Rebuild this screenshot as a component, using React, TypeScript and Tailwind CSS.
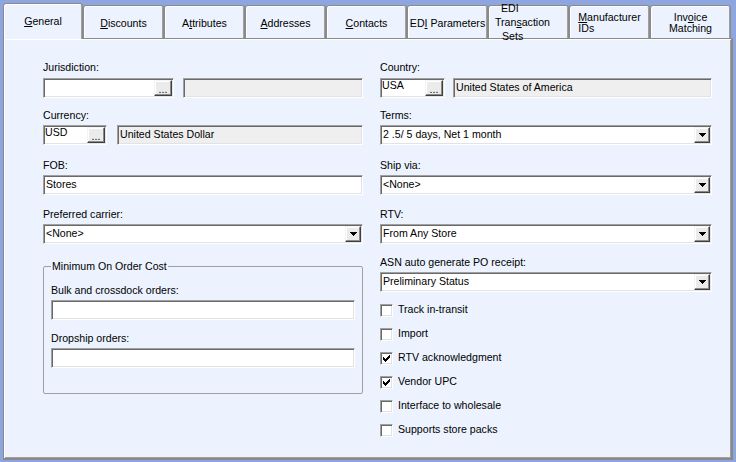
import React from 'react';

const SUNKEN =
  'border border-t-[#a0a0a0] border-l-[#a0a0a0] border-r-white border-b-white shadow-[inset_1px_1px_0_#696969,inset_-1px_-1px_0_#e3e3e3]';
const RAISED =
  'border border-t-[#f4f4f4] border-l-[#f4f4f4] border-r-[#404040] border-b-[#404040] shadow-[inset_-1px_-1px_0_#8a8a8a,inset_1px_1px_0_#ffffff] bg-[#ebebeb]';
const TAB =
  'bg-[#ecf3fe] border border-b-0 border-[#8a8a8a] rounded-t-[3px] shadow-[inset_1px_1px_0_#ffffff,inset_-1px_0_0_#a0a0a0]';

function Label({ children, className = '' }: { children: React.ReactNode; className?: string }) {
  return (
    <div className={`h-[13px] leading-[13px] mb-[3px] whitespace-nowrap ${className}`}>{children}</div>
  );
}

function TextBox({ value = '', readOnly = false, className = '' }: { value?: string; readOnly?: boolean; className?: string }) {
  return (
    <div
      className={`${SUNKEN} h-[20px] flex items-center pl-[2px] whitespace-nowrap ${
        readOnly ? 'bg-[#efefef]' : 'bg-white'
      } ${className}`}
    >
      {value}
    </div>
  );
}

function DotsButton() {
  return (
    <div className={`${RAISED} w-[18px] h-[16px] mr-px self-center flex items-end justify-center leading-[10px] pb-[1px]`}>
      ...
    </div>
  );
}

function LookupBox({ code = '', width }: { code?: string; width: string }) {
  return (
    <div className={`${SUNKEN} ${width} h-[20px] bg-white flex`}>
      <div className="flex-1 leading-[13px] pl-px">{code}</div>
      <DotsButton />
    </div>
  );
}

function Arrow() {
  return (
    <svg width="7" height="4" viewBox="0 0 7 4" shapeRendering="crispEdges">
      <path d="M0 0h7v1H0z M1 1h5v1H1z M2 2h3v1H2z M3 3h1v1H3z" fill="#000" />
    </svg>
  );
}

function Select({ value }: { value: string }) {
  return (
    <div className={`${SUNKEN} h-[20px] bg-white flex items-center`}>
      <div className="flex-1 pl-[2px] whitespace-nowrap">{value}</div>
      <div className={`${RAISED} w-[16px] h-[16px] mr-px flex items-center justify-center`}>
        <Arrow />
      </div>
    </div>
  );
}

const CHECK_PIXELS: [number, number][] = [
  [6, 0],
  [5, 1], [6, 1],
  [0, 2], [4, 2], [5, 2], [6, 2],
  [0, 3], [1, 3], [3, 3], [4, 3], [5, 3],
  [0, 4], [1, 4], [2, 4], [3, 4], [4, 4],
  [1, 5], [2, 5], [3, 5],
  [2, 6],
];

function CheckRow({ label, checked = false }: { label: string; checked?: boolean }) {
  return (
    <div className="h-[24px] flex items-center">
      <div className={`${SUNKEN} w-[13px] h-[13px] bg-white flex items-center justify-center`}>
        {checked && (
          <svg width="7" height="7" viewBox="0 0 7 7" shapeRendering="crispEdges">
            {CHECK_PIXELS.map(([x, y]) => (
              <rect key={`${x}-${y}`} x={x} y={y} width="1" height="1" fill="#000" />
            ))}
          </svg>
        )}
      </div>
      <span className="ml-[5px] whitespace-nowrap">{label}</span>
    </div>
  );
}

const U = ({ children }: { children: React.ReactNode }) => <span className="underline underline-offset-[1px]">{children}</span>;

const TABS: { key: string; content: React.ReactNode }[] = [
  { key: 'discounts', content: <span className="mt-[2px]"><U>D</U>iscounts</span> },
  { key: 'attributes', content: <span className="mt-[2px]">A<U>t</U>tributes</span> },
  { key: 'addresses', content: <span className="mt-[2px]"><U>A</U>ddresses</span> },
  { key: 'contacts', content: <span className="mt-[2px]"><U>C</U>ontacts</span> },
  { key: 'edi', content: <span className="mt-[2px] whitespace-nowrap">ED<U>I</U> Parameters</span> },
  {
    key: 'edisets',
    content: (
      <div className="leading-[14px] pl-[6px] -mt-[3px] w-full">
        <div className="pl-[6px]">EDI</div>
        <div>Tran<U>s</U>action</div>
        <div className="pl-[7px]">Sets</div>
      </div>
    ),
  },
  {
    key: 'manufacturer',
    content: (
      <div className="leading-[11px] text-left">
        <div><U>M</U>anufacturer</div>
        <div>IDs</div>
      </div>
    ),
  },
  {
    key: 'invoice',
    content: (
      <div className="leading-[11px] text-center">
        <div>Inv<U>o</U>ice</div>
        <div>Matching</div>
      </div>
    ),
  },
];

export default function App() {
  return (
    <div className="w-[736px] h-[462px] bg-[#8ea6e0] pl-[3px] pt-[3px] pr-[3px] pb-[2px] flex flex-col overflow-hidden text-[10.6px] text-black font-['Liberation_Sans','Arial',sans-serif]">
      <div className="relative z-10 flex items-start h-[36px]">
        <div className={`${TAB} w-[80px] h-[36px] flex items-center justify-center`}>
          <span>
            <U>G</U>eneral
          </span>
        </div>
        {TABS.map((t) => (
          <div key={t.key} className={`${TAB} w-[81px] h-[33px] mt-[2px] flex items-center justify-center pt-[2px]`}>
            {t.content}
          </div>
        ))}
      </div>

      <div className="flex-1 -mt-px bg-[#ecf3fe] border-l border-t border-r-2 border-b-2 border-[#8a8a8a] shadow-[inset_1px_1px_0_#ffffff,inset_-1px_-1px_0_#a0a0a0] pl-[39px] pt-[22px] flex gap-[17px]">
        {/* left column */}
        <div className="w-[320px] flex flex-col">
          <Label>Jurisdiction:</Label>
          <div className="flex mt-px">
            <LookupBox width="w-[131px]" />
            <TextBox readOnly className="flex-1 ml-[9px]" />
          </div>

          <Label className="mt-[11px]">Currency:</Label>
          <div className="flex">
            <LookupBox code="USD" width="w-[64px]" />
            <TextBox readOnly value="United States Dollar" className="flex-1 ml-[10px]" />
          </div>

          <Label className="mt-[14px]">FOB:</Label>
          <TextBox value="Stores" />

          <Label className="mt-[13px]">Preferred carrier:</Label>
          <Select value="<None>" />

          <fieldset className="mt-[16px] border border-[#a0a0a0] rounded-[2px] px-[7px] pb-[25px]">
            <legend className="px-px leading-[12px]">Minimum On Order Cost</legend>
            <Label className="mt-[12px]">Bulk and crossdock orders:</Label>
            <TextBox />
            <Label className="mt-[12px]">Dropship orders:</Label>
            <TextBox />
          </fieldset>
        </div>

        {/* right column */}
        <div className="w-[332px] flex flex-col">
          <Label>Country:</Label>
          <div className="flex mt-px">
            <LookupBox code="USA" width="w-[65px]" />
            <TextBox readOnly value="United States of America" className="flex-1 ml-[8px]" />
          </div>

          <Label className="mt-[11px]">Terms:</Label>
          <Select value="2 .5/ 5 days, Net 1 month" />

          <Label className="mt-[14px]">Ship via:</Label>
          <Select value="<None>" />

          <Label className="mt-[13px]">RTV:</Label>
          <Select value="From Any Store" />

          <Label className="mt-[12px]">ASN auto generate PO receipt:</Label>
          <Select value="Preliminary Status" />

          <div className="mt-[6px] flex flex-col">
            <CheckRow label="Track in-transit" />
            <CheckRow label="Import" />
            <CheckRow label="RTV acknowledgment" checked />
            <CheckRow label="Vendor UPC" checked />
            <CheckRow label="Interface to wholesale" />
            <CheckRow label="Supports store packs" />
          </div>
        </div>
      </div>
    </div>
  );
}
